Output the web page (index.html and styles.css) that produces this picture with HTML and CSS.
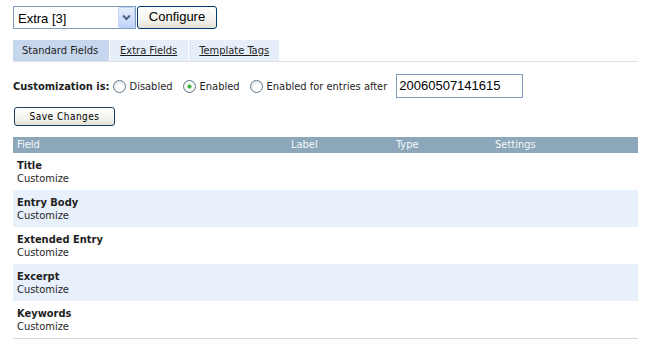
FILE: index.html
```html
<!DOCTYPE html>
<html>
<head>
<meta charset="utf-8">
<link rel="stylesheet" href="styles.css">
</head>
<body>
<div class="page">
  <div class="toolbar">
    <div class="select-wrap">
      <select class="select"><option>Extra [3]</option></select>
      <span class="select-arrow"><svg width="9" height="7" viewBox="0 0 9 7"><path d="M1 1.5 L4.5 5 L8 1.5" fill="none" stroke="#4d6185" stroke-width="2"/></svg></span>
    </div>
    <button class="btn btn-config">Configure</button>
  </div>

  <div class="tabs">
    <span class="tab active">Standard Fields</span>
    <span class="tab"><a href="#">Extra Fields</a></span>
    <span class="tab"><a href="#">Template Tags</a></span>
  </div>

  <div class="custom-row">
    <span class="custom-label">Customization is:</span>
    <label class="opt"><input type="radio" name="c" class="radio">Disabled</label>
    <label class="opt"><input type="radio" name="c" class="radio" checked>Enabled</label>
    <label class="opt"><input type="radio" name="c" class="radio">Enabled for entries after</label>
    <input type="text" class="text-input" value="20060507141615">
  </div>

  <div class="save-row">
    <button class="btn btn-save">Save Changes</button>
  </div>

  <table class="fields">
    <thead>
      <tr><th class="c-field">Field</th><th class="c-label">Label</th><th class="c-type">Type</th><th class="c-set">Settings</th></tr>
    </thead>
    <tbody>
      <tr><td><b>Title</b><br>Customize</td><td></td><td></td><td></td></tr>
      <tr class="alt"><td><b>Entry Body</b><br>Customize</td><td></td><td></td><td></td></tr>
      <tr><td><b>Extended Entry</b><br>Customize</td><td></td><td></td><td></td></tr>
      <tr class="alt"><td><b>Excerpt</b><br>Customize</td><td></td><td></td><td></td></tr>
      <tr><td><b>Keywords</b><br>Customize</td><td></td><td></td><td></td></tr>
    </tbody>
  </table>
</div>
</body>
</html>
```

FILE: styles.css
```css
html, body {
  margin: 0;
  padding: 0;
  background: #fff;
}
body {
  font-family: "DejaVu Sans Condensed", "DejaVu Sans", sans-serif;
  font-size: 11px;
  color: #1e1e1e;
}
.page {
  width: 625px;
  margin-left: 13px;
  padding-top: 6px;
}
.toolbar {
  display: flex;
  align-items: flex-start;
  height: 23px;
}
.select-wrap {
  position: relative;
  width: 123px;
  height: 23px;
}
.select {
  appearance: none;
  -webkit-appearance: none;
  box-sizing: border-box;
  width: 123px;
  height: 23px;
  margin: 0;
  border: 1px solid #7f9db9;
  background: #fff;
  font-family: "Liberation Sans", Arial, sans-serif;
  font-size: 13px;
  color: #000;
  padding: 1px 0 0 4px;
  border-radius: 0;
}
.select-arrow {
  position: absolute;
  right: 1px;
  top: 1px;
  width: 17px;
  height: 21px;
  box-sizing: border-box;
  border: 1px solid #c3d3fd;
  border-radius: 2px;
  background: linear-gradient(#e6eefc, #c1d3fb);
  display: flex;
  align-items: center;
  justify-content: center;
}
.btn {
  font-family: "Liberation Sans", Arial, sans-serif;
  border: 1px solid #003c74;
  border-radius: 3px;
  background: linear-gradient(#ffffff 0%, #f4f3ee 60%, #e3e0d2 100%);
  color: #000;
  padding: 0;
  margin: 0;
}
.btn-config {
  width: 80px;
  height: 23px;
  margin-left: 1px;
  font-size: 13px;
  padding-bottom: 2px;
}
.tabs {
  display: flex;
  margin-top: 11px;
  border-bottom: 1px solid #dde3ea;
  height: 21px;
}
.tab {
  display: flex;
  align-items: center;
  height: 21px;
  background: #e6eef9;
  border-right: 1px solid #fff;
  padding: 0 10px;
  color: #1e1e1e;
  font-size: 11px;
}
.tab.active {
  background: #c6d6ec;
  padding: 0 11px 0 9px;
}
.tab a {
  color: #1e1e1e;
  text-decoration: underline;
}
.tab:nth-child(2) { padding: 0 11px 0 10px; }
.tab:nth-child(3) { padding: 0 10px 0 10px; }
.custom-row {
  display: flex;
  align-items: center;
  margin-top: 12px;
  height: 24px;
}
.custom-label {
  font-weight: bold;
  margin-right: 3px;
}
.opt {
  display: flex;
  align-items: center;
  margin-right: 10px;
  color: #1e1e1e;
}
.radio {
  appearance: none;
  -webkit-appearance: none;
  width: 13px;
  height: 13px;
  margin: 0 4px 0 0;
  box-sizing: border-box;
  border: 1px solid #5e7991;
  border-radius: 50%;
  background: radial-gradient(circle at 60% 65%, #ffffff 30%, #dcdcd2 100%);
}
.radio:checked {
  background: radial-gradient(circle, #2ca62c 0, #4fbf4f 1.6px, #ffffff 2.6px, #f4f4ee 70%, #d4d4c8 100%);
}
.text-input {
  box-sizing: border-box;
  width: 127px;
  height: 24px;
  margin: -1px 0 0 -1px;
  border: 1px solid #7f9db9;
  font-family: "Liberation Sans", Arial, sans-serif;
  font-size: 13px;
  color: #000;
  padding: 0 2px;
}
.save-row {
  margin-top: 9px;
  height: 19px;
}
.btn-save {
  width: 101px;
  height: 19px;
  margin-left: 1px;
  font-family: "DejaVu Sans Condensed", "DejaVu Sans", sans-serif;
  font-size: 10px;
  letter-spacing: 0.5px;
  border-color: #1d3e63;
}
.fields {
  width: 625px;
  border-collapse: collapse;
  margin-top: 11px;
  border-bottom: 1px solid #d5d9de;
}
.fields th {
  background: #8ca7ba;
  color: #f4f7fa;
  font-weight: normal;
  text-align: left;
  height: 16px;
  padding: 0 4px;
  line-height: 16px;
}
.c-field { width: 266px; }
.c-label { width: 97px; }
.c-type { width: 91px; }
.fields td {
  padding: 6px 4px 5px;
  line-height: 13px;
  height: 26px;
  vertical-align: top;
  color: #1e1e1e;
}
.fields tr.alt td {
  background: #e8f0fc;
}
```
